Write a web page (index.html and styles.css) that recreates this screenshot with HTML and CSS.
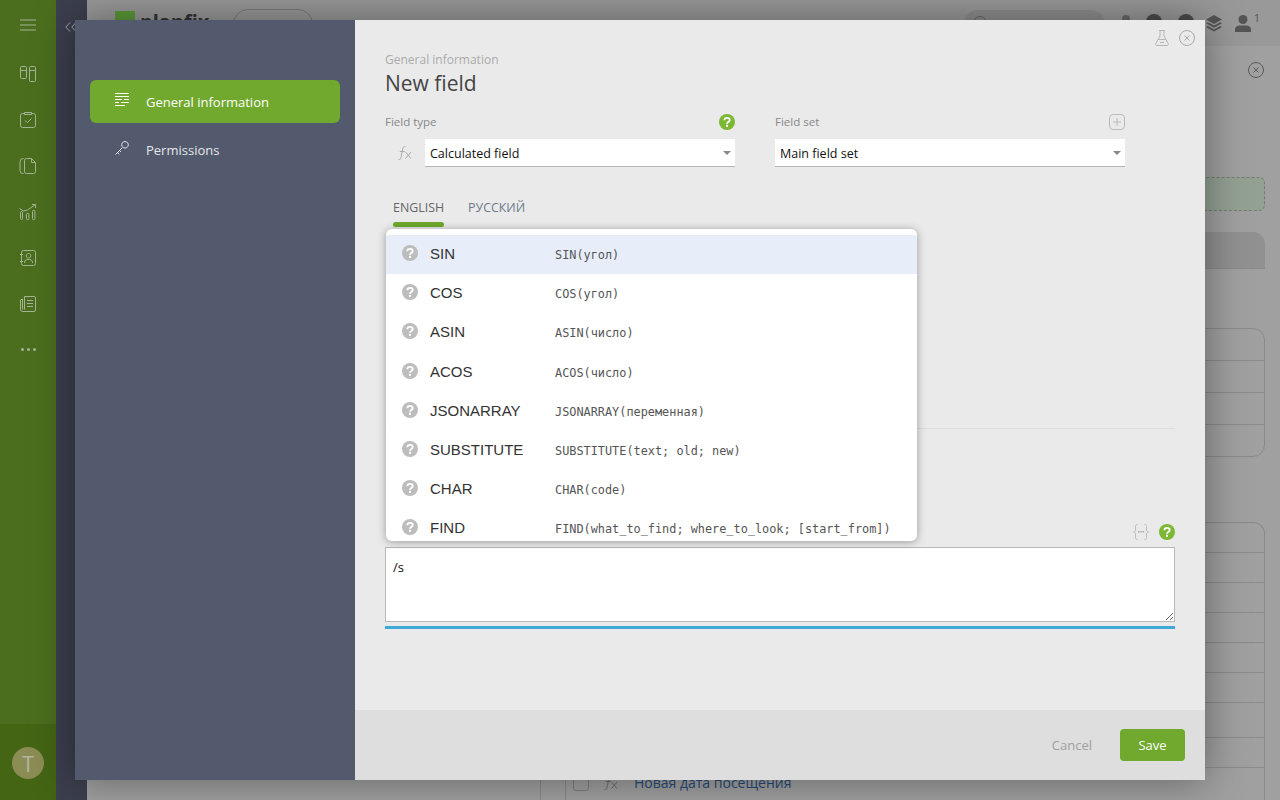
FILE: index.html
```html
<!DOCTYPE html>
<html lang="en">

<head>
    <meta charset="UTF-8">
    <title>New field</title>
    <link rel="stylesheet" href="styles.css">
</head>

<body>
    <svg class="sprite">
        <symbol id="i-help" viewBox="0 0 16 16">
            <circle cx="8" cy="8" r="8" fill="currentColor" />
            <path d="M5.400 6.300c0-1.500 1.100-2.400 2.600-2.400s2.700.9 2.700 2.200c0 1.900-2.700 1.900-2.700 3.600" fill="none" stroke="#fff" stroke-width="1.900" />
            <rect x="7" y="10.800" width="2" height="2" fill="#fff" />
        </symbol>
        <symbol id="i-close" viewBox="0 0 16 16">
            <circle cx="8" cy="8" r="7.500" fill="none" stroke="currentColor" />
            <path d="M5.500 5.500l5 5M10.500 5.500l-5 5" fill="none" stroke="currentColor" />
        </symbol>
        <symbol id="i-fx" viewBox="0 0 16 16">
            <path d="M1.500 14.500c1.500.3 2.200-.4 2.500-1.800L5.800 3.600C6.100 2 7 1.300 8.400 1.600M2.800 6.500h5M8.500 7l5.500 6.500M14 7l-5.500 6.500" fill="none" stroke="currentColor" />
        </symbol>
    </svg>

    <!-- page behind the window -->
    <div class="page">
        <nav class="rail">
            <div class="rail-burger">
                <svg width="16" height="12" viewBox="0 0 16 12"><path d="M0 1h16M0 6h16M0 11h16" /></svg>
            </div>
            <div class="rail-icons">
                <svg width="18" height="18" viewBox="0 0 18 18"><path d="M2.500 1.500h4a1 1 0 0 1 1 1v10a1 1 0 0 1-1 1h-4a1 1 0 0 1-1-1v-10a1 1 0 0 1 1-1zM1.500 5.500h6M11.500 1.500h4a1 1 0 0 1 1 1v13a1 1 0 0 1-1 1h-4a1 1 0 0 1-1-1v-13a1 1 0 0 1 1-1zM10.500 5.500h6" /></svg>
                <svg width="18" height="18" viewBox="0 0 18 18"><path d="M5.500 2.500h-2a2 2 0 0 0-2 2v10a2 2 0 0 0 2 2h11a2 2 0 0 0 2-2v-10a2 2 0 0 0-2-2h-2M5.500 3.500v-2h7v2zM6 9.500l2.200 2.200L12.500 7.500" /></svg>
                <svg width="18" height="18" viewBox="0 0 18 18"><path d="M4.500 1.500h-.5a3 3 0 0 0-3 3v9a3 3 0 0 0 3 3h.5M7.500 1.500h5l4 4v9a2 2 0 0 1-2 2h-7a2 2 0 0 1-2-2v-11a2 2 0 0 1 2-2zM12.500 1.500v4h4" /></svg>
                <svg width="18" height="18" viewBox="0 0 18 18"><path d="M1.500 9.500a1 1 0 0 1 2 0v6a1 1 0 0 1-2 0zM7.500 11.500a1.200 1.200 0 0 1 2.400 0v4a1.200 1.200 0 0 1-2.400 0zM13.500 8.500a1.200 1.200 0 0 1 2.400 0v7a1.200 1.200 0 0 1-2.400 0zM.5 5.500l4 2.500 4-1 8-5.500M13 1.500h3.500v3.500" /></svg>
                <svg width="18" height="18" viewBox="0 0 18 18"><path d="M4.500 1.500h10a2 2 0 0 1 2 2v11a2 2 0 0 1-2 2h-10a2 2 0 0 1-2-2v-11a2 2 0 0 1 2-2zM1 5.500h3M1 12.500h3M9.500 4.500a2.300 2.300 0 1 1-.01 0zM5.500 14v-1a3 3 0 0 1 3-2.500h2a3 3 0 0 1 3 2.500v1" /></svg>
                <svg width="18" height="18" viewBox="0 0 18 18"><path d="M5.500 1.500h9.500a1.500 1.500 0 0 1 1.500 1.500v12a1.500 1.500 0 0 1-1.500 1.500h-11.500a2 2 0 0 1-2-2v-9.500l2-1v10.500M5.500 1.500v13M8 5.500h6M8 8.500h6M8 11.500h6" /></svg>
                <div class="rail-dots"><i></i><i></i><i></i></div>
            </div>
            <div class="rail-user"><span class="avatar">T</span></div>
        </nav>
        <div class="strip">
            <svg width="12" height="10" viewBox="0 0 12 10"><path d="M5 .5L.8 5 5 9.500M11 .5L6.800 5 11 9.500" /></svg>
        </div>
        <div class="content">
            <header class="top">
                <div class="logo-mark"></div>
                <div class="logo-name">planfix</div>
                <div class="top-pill">+ Create</div>
                <div class="top-right">
                    <div class="top-search">
                        <span class="search-glass"></span>
                        <span>Actions</span>
                    </div>
                    <span class="top-bell"></span>
                    <span class="top-dot"></span>
                    <span class="top-dot"></span>
                    <svg class="top-layers" width="16" height="17" viewBox="0 0 16 17"><path d="M8 0l8 4.500-8 4.500-8-4.500zM1.800 7.200L8 10.600l6.200-3.400L16 8.300l-8 4.500-8-4.500zM1.800 11l6.200 3.400 6.200-3.400 1.800 1.100-8 4.500-8-4.500z" /></svg>
                    <div class="top-user">
                        <svg width="16" height="17" viewBox="0 0 16 17"><circle cx="8" cy="4.500" r="4.500" /><path d="M0 17v-2.500c0-2.500 2.500-4 5-4h6c2.500 0 5 1.500 5 4V17z" /></svg>
                        <sup>1</sup>
                    </div>
                </div>
            </header>
            <div class="content-body">
                <svg class="page-close"><use href="#i-close" /></svg>
                <div class="drop-zone"></div>
                <div class="gray-tab"></div>
                <div class="rows rows-short">
                    <div></div><div></div><div></div><div></div>
                </div>
                <div class="rows rows-long">
                    <div></div><div></div><div></div><div></div><div></div><div></div><div class="row-tall"></div><div></div>
                    <div class="row-field">
                        <span class="check"></span>
                        <svg class="row-fx"><use href="#i-fx" /></svg>
                        <span class="row-link">Новая дата посещения</span>
                    </div>
                </div>
            </div>
        </div>
    </div>

    <!-- window -->
    <div class="window">
        <aside class="side">
            <a class="side-item active" href="#">
                <svg width="14" height="14" viewBox="0 0 14 14"><path d="M0 .5h14M0 3.500h14M0 6.500h7M9 6.500h5M0 9.500h4M6 9.500h8M0 12.500h10" /></svg>
                General information
            </a>
            <a class="side-item" href="#">
                <svg width="14" height="14" viewBox="0 0 14 14"><path d="M10 .5a3.300 3.300 0 1 1-.01 0zM7.500 6.500L.5 13.500M2.500 11.500l1.800 1.800M4.500 9.500l1.500 1.500" /></svg>
                Permissions
            </a>
        </aside>
        <main class="main">
            <div class="win-tools">
                <svg width="14" height="16" viewBox="0 0 14 16"><path d="M4 .5h6M5 .5v5.500L.8 13.500a1.300 1.300 0 0 0 1.200 2h10a1.300 1.300 0 0 0 1.200-2L9 6V.5M3.500 9.500h7M5 12.500h4" /></svg>
                <svg class="win-close"><use href="#i-close" /></svg>
            </div>
            <div class="form">
                <div class="crumb">General information</div>
                <h1>New field</h1>
                <div class="fields">
                    <div class="field">
                        <div class="field-label">
                            <span>Field type</span>
                            <svg class="help green"><use href="#i-help" /></svg>
                        </div>
                        <div class="field-row">
                            <svg class="type-fx"><use href="#i-fx" /></svg>
                            <div class="select">Calculated field</div>
                        </div>
                    </div>
                    <div class="field">
                        <div class="field-label">
                            <span>Field set</span>
                            <svg class="add-set" width="16" height="16" viewBox="0 0 16 16"><path d="M4 .5h8M4 15.500h8M.5 4v8M15.500 4v8M4 .5a3.500 3.500 0 0 0-3.500 3.500M12 .5a3.500 3.500 0 0 1 3.500 3.500M4 15.500a3.500 3.500 0 0 1-3.500-3.500M12 15.500a3.500 3.500 0 0 0 3.500-3.500M8 4v8M4 8h8" /></svg>
                        </div>
                        <div class="field-row">
                            <div class="select">Main field set</div>
                        </div>
                    </div>
                </div>
                <div class="tabs">
                    <a class="tab active" href="#">ENGLISH</a>
                    <a class="tab" href="#">РУССКИЙ</a>
                </div>
                <div class="lang-pane">
                    <ul class="suggest">
                        <li class="hover">
                            <svg class="help"><use href="#i-help" /></svg><span class="fn-name">SIN</span><code>SIN(угол)</code>
                        </li>
                        <li>
                            <svg class="help"><use href="#i-help" /></svg><span class="fn-name">COS</span><code>COS(угол)</code>
                        </li>
                        <li>
                            <svg class="help"><use href="#i-help" /></svg><span class="fn-name">ASIN</span><code>ASIN(число)</code>
                        </li>
                        <li>
                            <svg class="help"><use href="#i-help" /></svg><span class="fn-name">ACOS</span><code>ACOS(число)</code>
                        </li>
                        <li>
                            <svg class="help"><use href="#i-help" /></svg><span class="fn-name">JSONARRAY</span><code>JSONARRAY(переменная)</code>
                        </li>
                        <li>
                            <svg class="help"><use href="#i-help" /></svg><span class="fn-name">SUBSTITUTE</span><code>SUBSTITUTE(text; old; new)</code>
                        </li>
                        <li>
                            <svg class="help"><use href="#i-help" /></svg><span class="fn-name">CHAR</span><code>CHAR(code)</code>
                        </li>
                        <li>
                            <svg class="help"><use href="#i-help" /></svg><span class="fn-name">FIND</span><code>FIND(what_to_find; where_to_look; [start_from])</code>
                        </li>
                    </ul>
                    <div class="divider"></div>
                    <div class="editor-tools">
                        <svg width="16" height="16" viewBox="0 0 16 16"><path d="M4.500.5c-1.500 0-2 .7-2 2v3.500c0 1-.5 1.700-2 2 1.500.3 2 1 2 2v3.500c0 1.300.5 2 2 2M11.500.5c1.500 0 2 .7 2 2v3.500c0 1 .5 1.700 2 2-1.500.3-2 1-2 2v3.500c0 1.300-.5 2-2 2" /><path class="dots" d="M5 7h1.500v1.500H5zM7.300 7h1.500v1.500H7.300zM9.600 7h1.500v1.500H9.600z" /></svg>
                        <svg class="help green"><use href="#i-help" /></svg>
                    </div>
                    <textarea class="formula">/s</textarea>
                    <div class="focus-line"></div>
                </div>
            </div>
            <footer class="win-foot">
                <a class="btn-cancel" href="#">Cancel</a>
                <a class="btn-save" href="#">Save</a>
            </footer>
        </main>
    </div>
</body>

</html>
```

FILE: styles.css
```css
html,
body {
    margin: 0;
    padding: 0;
    height: 100%;
    overflow: hidden;
}

body {
    font-family: "Open Sans", "Liberation Sans", sans-serif;
    font-size: 13px;
    background: #a0a0a0;
}

a {
    text-decoration: none;
}

.sprite {
    display: none;
}

/* page behind */
.page {
    display: flex;
    height: 800px;
}

.rail {
    width: 56px;
    background: #4a6e1e;
    display: flex;
    flex-direction: column;
    color: #a4b494;
}

.rail svg {
    fill: none;
    stroke: #a4b494;
    stroke-width: 1;
}

.rail-burger {
    height: 45px;
    padding-top: 17px;
    box-sizing: border-box;
    text-align: center;
}

.rail-icons {
    display: flex;
    flex-direction: column;
    align-items: center;
    gap: 28px;
    padding-top: 20px;
}

.rail-dots {
    display: flex;
    gap: 3px;
    height: 4px;
    margin-top: 7px;
}

.rail-dots i {
    width: 3px;
    height: 3px;
    border-radius: 50%;
    background: #a4b494;
}

.rail-user {
    margin-top: auto;
    height: 76px;
    background: #436514;
    display: flex;
    justify-content: center;
    padding-top: 23px;
    box-sizing: border-box;
}

.avatar {
    width: 32px;
    height: 32px;
    border-radius: 50%;
    background: #8c8c55;
    color: #b4b4a4;
    font-size: 22px;
    line-height: 32px;
    text-align: center;
}

.strip {
    width: 31px;
    background: #3c3f4e;
    padding: 18px 0 0 9px;
    box-sizing: border-box;
}

.strip svg {
    fill: none;
    stroke: #a8a8ae;
    stroke-width: 1;
}

.content {
    flex: 1;
    display: flex;
    flex-direction: column;
    min-width: 0;
}

.top {
    height: 46px;
    background: #999999;
    display: flex;
    align-items: flex-start;
    padding: 0 20px 0 28px;
    flex: none;
}

.logo-mark {
    width: 20px;
    height: 20px;
    margin-top: 11px;
    background: #5c9a38;
}

.logo-name {
    width: 68px;
    margin: 7px 0 0 5px;
    font-size: 20px;
    line-height: 30px;
    font-weight: 700;
    color: #333333;
}

.top-pill {
    width: 78px;
    height: 28px;
    margin: 9px 0 0 25px;
    border: 1px solid #7a7a7a;
    border-radius: 15px;
    text-align: center;
    line-height: 28px;
    color: #555555;
}

.top-right {
    margin-left: auto;
    display: flex;
    align-items: flex-start;
}

.top-search {
    width: 141px;
    height: 36px;
    padding-left: 9px;
    margin-top: 10px;
    box-sizing: border-box;
    background: #8e8e8e;
    border-radius: 14px;
    display: flex;
    gap: 8px;
    color: #555555;
    line-height: 36px;
}

.search-glass {
    width: 12px;
    height: 12px;
    margin-top: 6px;
    border: 1px solid #666666;
    border-radius: 50%;
}

.top-bell {
    width: 8px;
    height: 14px;
    margin: 15px 0 0 17px;
    border-radius: 4px 4px 0 0;
    background: #6a6a6a;
}

.top-dot {
    width: 16px;
    height: 16px;
    margin: 14px 0 0 16px;
    border-radius: 50%;
    background: #4c4c4c;
}

.top-layers {
    margin: 15px 0 0 12px;
    fill: #555555;
}

.top-user {
    display: flex;
    margin: 15px 0 0 13px;
    fill: #555555;
    color: #555555;
}

.top-user sup {
    font-size: 11px;
    line-height: 12px;
    margin: -3px 0 0 3px;
}

.content-body {
    position: relative;
    flex: 1;
    margin-left: 453px;
    padding-right: 15px;
    border-left: 1px solid #8a8a8a;
    min-height: 0;
    overflow: hidden;
}

.page-close {
    position: absolute;
    right: 16px;
    top: 16px;
    width: 16px;
    height: 16px;
    color: #5a5a5a;
}

.drop-zone {
    height: 32px;
    margin-top: 131px;
    border: 1px dashed #737d73;
    border-radius: 6px;
    background: #93a193;
}

.gray-tab {
    height: 36px;
    margin-top: 21px;
    border-radius: 12px 12px 0 0;
    background: #919191;
    border-bottom: 1px solid #8a8a8a;
}

.rows {
    border: 1px solid #8a8a8a;
    border-radius: 12px;
    margin-left: 24px;
}

.rows>div {
    height: 29px;
    border-bottom: 1px solid #8a8a8a;
}

.rows>div:last-child {
    border-bottom: 0;
}

.rows-short {
    margin-top: 59px;
}

.rows-short>div {
    height: 31px;
}

.rows-long {
    margin-top: 65px;
    height: 400px;
    border-bottom: 0;
    border-radius: 12px 12px 0 0;
}

.rows>.row-tall {
    height: 34px;
}

.rows>.row-field {
    height: 29px;
    border-bottom: 1px solid #8a8a8a;
    display: flex;
    align-items: center;
    padding-left: 7px;
}

.check {
    width: 14px;
    height: 14px;
    border: 1px solid #7d7d7d;
    border-radius: 3px;
}

.row-fx {
    width: 16px;
    height: 16px;
    margin-left: 14px;
    color: #6e6e6e;
}

.row-link {
    margin-left: 15px;
    font-size: 14px;
    color: #264a78;
}

/* window */
.window {
    position: absolute;
    left: 75px;
    top: 20px;
    width: 1130px;
    height: 760px;
    display: flex;
    box-shadow: 0 0 40px rgba(0, 0, 0, .4);
}

.side {
    width: 280px;
    background: #535a6e;
    padding: 60px 15px 0;
    box-sizing: border-box;
}

.side-item {
    display: flex;
    align-items: center;
    gap: 17px;
    height: 43px;
    margin-bottom: 5px;
    padding-left: 25px;
    border-radius: 6px;
    color: #e4e6ea;
}

.side-item svg {
    margin-top: -4px;
    fill: none;
    stroke: #e4e6ea;
    stroke-width: 1;
}

.side-item.active {
    background: #70a92d;
    color: #ffffff;
}

.side-item.active svg {
    stroke: #ffffff;
}

.main {
    flex: 1;
    position: relative;
    background: #eaeaea;
    display: flex;
    flex-direction: column;
}

.win-tools {
    position: absolute;
    top: 10px;
    right: 10px;
    display: flex;
    gap: 10px;
}

.win-tools svg {
    fill: none;
    stroke: #b4b4b4;
    stroke-width: 1;
}

.win-tools .win-close {
    width: 16px;
    height: 16px;
    color: #a8a8a8;
    stroke: none;
}

.form {
    flex: 1;
    padding: 31px 30px 0;
}

.crumb {
    font-size: 12px;
    line-height: 18px;
    color: #aaaaaa;
}

h1 {
    margin: -2px 0 0;
    font-size: 21px;
    font-weight: 400;
    line-height: 32px;
    color: #444444;
}

.fields {
    display: flex;
    gap: 40px;
    margin-top: 14px;
}

.field {
    width: 350px;
}

.field-label {
    display: flex;
    justify-content: space-between;
    align-items: center;
    height: 18px;
    margin-bottom: 8px;
    font-size: 11.5px;
    color: #888888;
}

.field-label span {
    margin-top: -1px;
}

.help {
    width: 16px;
    height: 16px;
    color: #bdbdbd;
    flex: none;
}

.help.green {
    color: #7cb833;
}

.add-set {
    fill: none;
    stroke: #bbbbbb;
    stroke-width: 1;
}

.field-row {
    display: flex;
    align-items: center;
}

.type-fx {
    width: 16px;
    height: 16px;
    margin: 0 12px;
    color: #aaaaaa;
    flex: none;
}

.select {
    flex: 1;
    position: relative;
    height: 28px;
    box-sizing: border-box;
    padding: 1px 0 0 5px;
    background: #ffffff;
    border-bottom: 1px solid #b4b4b4;
    font-size: 12.5px;
    line-height: 27px;
    color: #111111;
}

.select::after {
    content: "";
    position: absolute;
    right: 4px;
    top: 12px;
    border-left: 4px solid transparent;
    border-right: 4px solid transparent;
    border-top: 4px solid #888888;
}

.tabs {
    display: flex;
    gap: 24px;
    margin-top: 33px;
    padding-left: 8px;
}

.tab {
    position: relative;
    height: 27px;
    font-size: 12.4px;
    line-height: 16px;
    color: #6c7a8c;
}

.tab.active {
    color: #666666;
}

.tab.active::after {
    content: "";
    position: absolute;
    left: 0;
    right: 0;
    bottom: 0;
    height: 5px;
    border-radius: 3px;
    background: #70a92d;
}

.lang-pane {
    position: relative;
    padding-top: 201px;
}

.suggest {
    position: absolute;
    left: 1px;
    top: 2px;
    width: 531px;
    height: 312px;
    margin: 0;
    padding: 6px 0 0;
    box-sizing: border-box;
    list-style: none;
    overflow: hidden;
    background: #ffffff;
    border-radius: 6px;
    box-shadow: 0 1px 8px rgba(0, 0, 0, .35);
}

.suggest li {
    display: flex;
    align-items: center;
    height: 39.2px;
    padding-left: 16px;
}

.suggest li.hover {
    background: #e7eefa;
}

.suggest .help {
    margin: -3px 12px 0 0;
}

.fn-name {
    width: 125px;
    margin-top: -2px;
    font-family: "Liberation Sans", Arial, sans-serif;
    font-size: 15px;
    color: #333333;
}

code {
    margin-top: 1px;
    font-family: "DejaVu Sans Mono", "Liberation Mono", monospace;
    font-size: 11.87px;
    color: #555555;
}

.divider {
    height: 1px;
    background: #dddddd;
}

.editor-tools {
    display: flex;
    justify-content: flex-end;
    gap: 10px;
    height: 16px;
    margin-top: 95px;
}

.editor-tools svg:first-child {
    fill: none;
    stroke: #bbbbbb;
    stroke-width: 1;
}

.editor-tools .dots {
    fill: #aaaaaa;
    stroke: none;
}

.formula {
    display: block;
    width: 100%;
    height: 75px;
    margin: 7px 0 0;
    padding: 10px 7px;
    box-sizing: border-box;
    border: 1px solid #b8b8b8;
    background: #ffffff;
    outline: 0;
    font-family: "Open Sans", "Liberation Sans", sans-serif;
    font-size: 13px;
    line-height: 18px;
    color: #111111;
}

.focus-line {
    height: 3px;
    margin-top: 4px;
    background: #3fa9d8;
}

.win-foot {
    height: 70px;
    background: #dedede;
    display: flex;
    align-items: center;
    justify-content: flex-end;
    gap: 28px;
    padding-right: 20px;
    flex: none;
}

.btn-cancel {
    color: #a0a0a0;
}

.btn-save {
    width: 65px;
    height: 32px;
    border-radius: 4px;
    background: #70a92d;
    color: #ffffff;
    text-align: center;
    line-height: 32px;
}
```
